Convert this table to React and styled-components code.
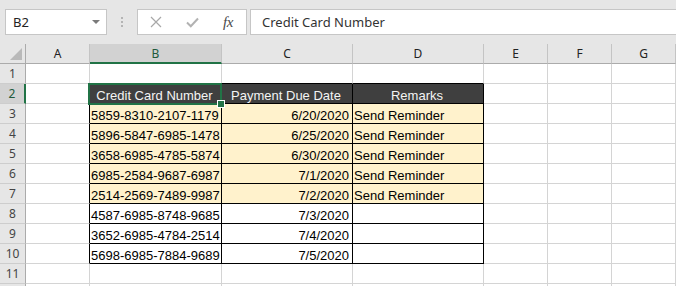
import React from "react";
import styled, { createGlobalStyle, css } from "styled-components";

const GREEN = "#217346";
const GRID = "#d4d4d4";

const GlobalStyle = createGlobalStyle`
  html, body {
    margin: 0;
    padding: 0;
    background: #ffffff;
  }
  body {
    overflow: hidden;
  }
`;

const Window = styled.div`
  width: 676px;
  height: 286px;
  overflow: hidden;
  background: #e6e6e6;
  font-family: "Noto Sans", "Liberation Sans", sans-serif;
`;

/* ---------- formula bar ---------- */

const FormulaBar = styled.div`
  display: flex;
  align-items: center;
  height: 44px;
  padding-left: 5px;
  box-sizing: border-box;
`;

const NameBox = styled.div`
  display: flex;
  align-items: center;
  justify-content: space-between;
  width: 102px;
  height: 26px;
  box-sizing: border-box;
  padding: 0 6px 0 7px;
  background: #ffffff;
  border: 1px solid #c6c6c6;
  font-size: 13px;
  color: #222222;
`;

const Caret = styled.span`
  width: 0;
  height: 0;
  border-left: 4px solid transparent;
  border-right: 4px solid transparent;
  border-top: 4px solid #7a7a7a;
`;

const Grip = styled.div`
  display: flex;
  flex-direction: column;
  align-items: center;
  justify-content: center;
  gap: 2px;
  width: 30px;
  span {
    width: 2px;
    height: 2px;
    background: #b4b4b4;
  }
`;

const FxBox = styled.div`
  display: grid;
  grid-template-columns: repeat(3, 36px);
  align-items: center;
  justify-items: center;
  width: 110px;
  height: 26px;
  box-sizing: border-box;
  background: #ffffff;
  border: 1px solid #c6c6c6;
`;

const Fx = styled.span`
  font-family: "Liberation Serif", serif;
  font-style: italic;
  font-size: 15px;
  color: #4a4a4a;
  letter-spacing: -0.5px;
`;

const FormulaInput = styled.div`
  flex: 1;
  display: flex;
  align-items: center;
  height: 26px;
  margin-left: 3px;
  padding-left: 11px;
  box-sizing: border-box;
  background: #ffffff;
  border: 1px solid #c6c6c6;
  border-right: none;
  font-size: 13px;
  color: #333333;
`;

/* ---------- sheet ---------- */

const Sheet = styled.div`
  display: grid;
  grid-template-columns: 26px 64px 132px 131px 131px 64px 64px 64px;
  grid-auto-rows: 20px;
  background: #ffffff;
`;

const Corner = styled.div`
  position: relative;
  background: #e6e6e6;
  border-right: 1px solid #ababab;
  border-bottom: 1px solid #ababab;
  &::after {
    content: "";
    position: absolute;
    right: 3px;
    bottom: 3px;
    width: 0;
    height: 0;
    border-left: 12px solid transparent;
    border-bottom: 12px solid #b9b9b9;
  }
`;

const headText = css`
  display: flex;
  align-items: center;
  justify-content: center;
  box-sizing: border-box;
  font-size: 12px;
  color: #333333;
`;

const ColHead = styled.div`
  ${headText}
  background: ${(p) => (p.$active ? "#d2d2d2" : "#e6e6e6")};
  border-right: 1px solid #c4c4c4;
  border-bottom: ${(p) => (p.$active ? `2px solid ${GREEN}` : "1px solid #ababab")};
  color: ${(p) => (p.$active ? "#215a3c" : "#222222")};
`;

const RowHead = styled.div`
  ${headText}
  background: ${(p) => (p.$active ? "#d2d2d2" : "#e6e6e6")};
  border-right: ${(p) => (p.$active ? `2px solid ${GREEN}` : "1px solid #ababab")};
  border-bottom: 1px solid #cdcdcd;
  color: ${(p) => (p.$active ? "#215a3c" : "#444444")};
`;

const Cell = styled.div`
  position: relative;
  box-sizing: border-box;
  padding: 5px 3px 0 1px;
  font-family: "Liberation Sans", Arial, sans-serif;
  font-size: 13px;
  line-height: 14px;
  white-space: nowrap;
  color: #000000;
  text-align: ${(p) => p.$align || "left"};
  background: ${(p) => p.$fill || "#ffffff"};
  border-right: 1px solid ${(p) => (p.$edgeR ? "#000000" : GRID)};
  border-bottom: 1px solid ${(p) => (p.$edgeB ? "#000000" : GRID)};
  ${(p) =>
    p.$head &&
    css`
      background: #3f3f3f;
      color: #f4f4f4;
      text-align: center;
    `}
`;

const Selection = styled.div`
  position: absolute;
  top: -1px;
  left: -2px;
  right: -1px;
  bottom: -2px;
  border: 2px solid ${GREEN};
  z-index: 2;
  pointer-events: none;
`;

const Handle = styled.div`
  position: absolute;
  right: -5px;
  bottom: -5px;
  width: 8px;
  height: 8px;
  box-sizing: border-box;
  background: ${GREEN};
  border: 1px solid #ffffff;
`;

const CrossIcon = () => (
  <svg width="12" height="12" viewBox="0 0 12 12">
    <path d="M1 1 L11 11 M11 1 L1 11" stroke="#a8a8a8" strokeWidth="1.2" fill="none" />
  </svg>
);

const CheckIcon = () => (
  <svg width="13" height="11" viewBox="0 0 13 11">
    <path d="M1 5.5 L4.8 9.2 L12 1.5" stroke="#b2b2b2" strokeWidth="2" fill="none" />
  </svg>
);

const columns = ["A", "B", "C", "D", "E", "F", "G"];

const records = [
  ["5859-8310-2107-1179", "6/20/2020", "Send Reminder"],
  ["5896-5847-6985-1478", "6/25/2020", "Send Reminder"],
  ["3658-6985-4785-5874", "6/30/2020", "Send Reminder"],
  ["6985-2584-9687-6987", "7/1/2020", "Send Reminder"],
  ["2514-2569-7489-9987", "7/2/2020", "Send Reminder"],
  ["4587-6985-8748-9685", "7/3/2020", ""],
  ["3652-6985-4784-2514", "7/4/2020", ""],
  ["5698-6985-7884-9689", "7/5/2020", ""],
];

const headers = ["Credit Card Number", "Payment Due Date", "Remarks"];

const VISIBLE_ROWS = 11;

// rows 2..10 hold the table in columns B..D
const renderRow = (r) => {
  const cells = [];
  const inTableRow = r >= 2 && r <= 10;
  const record = r >= 3 && r <= 10 ? records[r - 3] : null;
  const flagged = record && record[2] !== "";

  columns.forEach((col, c) => {
    const inTableCol = c >= 1 && c <= 3;
    const key = `${col}${r}`;

    if (inTableRow && inTableCol) {
      const i = c - 1;
      if (r === 2) {
        cells.push(
          <Cell key={key} $head $edgeR $edgeB>
            {headers[i]}
            {c === 1 && (
              <Selection>
                <Handle />
              </Selection>
            )}
          </Cell>
        );
      } else {
        cells.push(
          <Cell
            key={key}
            $edgeR
            $edgeB
            $align={i === 1 ? "right" : "left"}
            $fill={flagged ? "#fff2cc" : "#ffffff"}
          >
            {record[i]}
          </Cell>
        );
      }
      return;
    }

    cells.push(
      <Cell
        key={key}
        $edgeR={inTableRow && c === 0}
        $edgeB={r === 1 && inTableCol}
      />
    );
  });

  return (
    <React.Fragment key={r}>
      <RowHead $active={r === 2}>{r <= VISIBLE_ROWS ? r : ""}</RowHead>
      {cells}
    </React.Fragment>
  );
};

const App = () => {
  const rowNumbers = Array.from({ length: 12 }, (_, i) => i + 1);

  return (
    <Window>
      <GlobalStyle />
      <FormulaBar>
        <NameBox>
          <span>B2</span>
          <Caret />
        </NameBox>
        <Grip>
          <span />
          <span />
          <span />
        </Grip>
        <FxBox>
          <CrossIcon />
          <CheckIcon />
          <Fx>fx</Fx>
        </FxBox>
        <FormulaInput>Credit Card Number</FormulaInput>
      </FormulaBar>
      <Sheet>
        <Corner />
        {columns.map((col) => (
          <ColHead key={col} $active={col === "B"}>
            {col}
          </ColHead>
        ))}
        {rowNumbers.map(renderRow)}
      </Sheet>
    </Window>
  );
};

export default App;
